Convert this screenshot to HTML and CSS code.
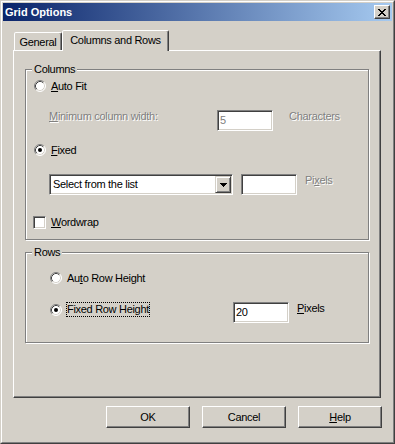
FILE: index.html
```html
<!DOCTYPE html>
<html>
<head>
<meta charset="utf-8">
<title>Grid Options</title>
<link rel="stylesheet" href="styles.css">
</head>
<body>
<div class="window">
  <div class="frame">
    <div class="titlebar">
      <span class="title">Grid Options</span>
      <div class="close">
        <svg width="8" height="7" viewBox="0 0 8 7" shape-rendering="crispEdges"><path fill="#000" d="M0 0h2v1H0zM6 0h2v1H6zM1 1h2v1H1zM5 1h2v1H5zM2 2h4v1H2zM3 3h2v1H3zM2 4h4v1H2zM1 5h2v1H1zM5 5h2v1H5zM0 6h2v1H0zM6 6h2v1H6z"/></svg>
      </div>
    </div>
    <div class="content">
      <div class="tabs">
        <div class="tab general">General</div>
        <div class="tab active">Columns and Rows</div>
      </div>
      <div class="panel">
        <div class="group cols">
          <span class="legend">Columns</span>
          <div class="row c1">
            <div class="opt">
              <svg class="radio" width="12" height="12" viewBox="0 0 12 12"><circle cx="6" cy="6" r="5" fill="#fff"/><path d="M2.82 9.18A4.5 4.5 0 0 1 9.18 2.82" stroke="#404040" fill="none"/><path d="M9.18 2.82A4.5 4.5 0 0 1 2.82 9.18" stroke="#D4D0C8" fill="none"/><path d="M2.11 9.89A5.5 5.5 0 0 1 9.89 2.11" stroke="#808080" fill="none"/><path d="M9.89 2.11A5.5 5.5 0 0 1 2.11 9.89" stroke="#fff" fill="none"/></svg>
              <span class="lbl"><u>A</u>uto Fit</span>
            </div>
          </div>
          <div class="row c2">
            <span class="dis mlabel"><u>M</u>inimum column width:</span>
            <div class="edit w56 grey">5</div>
            <span class="dis unit16">Characters</span>
          </div>
          <div class="row c3">
            <div class="opt">
              <svg class="radio" width="12" height="12" viewBox="0 0 12 12"><circle cx="6" cy="6" r="5" fill="#fff"/><path d="M2.82 9.18A4.5 4.5 0 0 1 9.18 2.82" stroke="#404040" fill="none"/><path d="M9.18 2.82A4.5 4.5 0 0 1 2.82 9.18" stroke="#D4D0C8" fill="none"/><path d="M2.11 9.89A5.5 5.5 0 0 1 9.89 2.11" stroke="#808080" fill="none"/><path d="M9.89 2.11A5.5 5.5 0 0 1 2.11 9.89" stroke="#fff" fill="none"/><circle cx="6" cy="6" r="2" fill="#000"/></svg>
              <span class="lbl"><u>F</u>ixed</span>
            </div>
          </div>
          <div class="row c4">
            <div class="select">
              <div class="select-text">Select from the list</div>
              <div class="dd-btn">
                <svg width="7" height="4" viewBox="0 0 7 4" shape-rendering="crispEdges"><path fill="#000" d="M0 0h7v1H0zM1 1h5v1H1zM2 2h3v1H2zM3 3h1v1H3z"/></svg>
              </div>
            </div>
            <div class="edit w56 gap8"></div>
            <span class="dis unit8">Pi<u>x</u>els</span>
          </div>
          <div class="row c5">
            <div class="opt">
              <div class="check"></div>
              <span class="lbl"><u>W</u>ordwrap</span>
            </div>
          </div>
        </div>

        <div class="group rows">
          <span class="legend">Rows</span>
          <div class="row rA">
            <div class="opt">
              <svg class="radio" width="12" height="12" viewBox="0 0 12 12"><circle cx="6" cy="6" r="5" fill="#fff"/><path d="M2.82 9.18A4.5 4.5 0 0 1 9.18 2.82" stroke="#404040" fill="none"/><path d="M9.18 2.82A4.5 4.5 0 0 1 2.82 9.18" stroke="#D4D0C8" fill="none"/><path d="M2.11 9.89A5.5 5.5 0 0 1 9.89 2.11" stroke="#808080" fill="none"/><path d="M9.89 2.11A5.5 5.5 0 0 1 2.11 9.89" stroke="#fff" fill="none"/></svg>
              <span class="lbl">Au<u>t</u>o Row Height</span>
            </div>
          </div>
          <div class="row rB">
            <div class="opt fixedw">
              <svg class="radio" width="12" height="12" viewBox="0 0 12 12"><circle cx="6" cy="6" r="5" fill="#fff"/><path d="M2.82 9.18A4.5 4.5 0 0 1 9.18 2.82" stroke="#404040" fill="none"/><path d="M9.18 2.82A4.5 4.5 0 0 1 2.82 9.18" stroke="#D4D0C8" fill="none"/><path d="M2.11 9.89A5.5 5.5 0 0 1 9.89 2.11" stroke="#808080" fill="none"/><path d="M9.89 2.11A5.5 5.5 0 0 1 2.11 9.89" stroke="#fff" fill="none"/><circle cx="6" cy="6" r="2" fill="#000"/></svg>
              <span class="lbl focus">Fixed Row Height</span>
            </div>
            <div class="edit w56">20</div>
            <span class="unit8"><u>P</u>ixels</span>
          </div>
        </div>
      </div>
      <div class="buttons">
        <button class="btn">OK</button>
        <button class="btn">Cancel</button>
        <button class="btn"><u>H</u>elp</button>
      </div>
    </div>
  </div>
</div>
</body>
</html>
```

FILE: styles.css
```css
html, body {
  margin: 0;
  padding: 0;
}
body {
  background: #D4D0C8;
  font-family: "Liberation Sans", Arial, sans-serif;
  font-size: 11px;
  line-height: 13px;
  letter-spacing: -0.3px;
  color: #000;
}
u {
  text-decoration: underline;
  text-underline-offset: 1px;
}
.window {
  width: 395px;
  height: 444px;
  box-sizing: border-box;
  border: 1px solid;
  border-color: #D4D0C8 #404040 #404040 #D4D0C8;
}
.frame {
  height: 100%;
  box-sizing: border-box;
  border: 1px solid;
  border-color: #fff #808080 #808080 #fff;
  padding: 1px;
  display: flex;
  flex-direction: column;
}
.titlebar {
  height: 18px;
  flex: none;
  background: linear-gradient(to right, #0A246A, #A6CAF0);
  display: flex;
  align-items: center;
  justify-content: space-between;
  padding: 0 2px 0 2px;
}
.title {
  color: #fff;
  font-weight: bold;
  letter-spacing: 0;
}
.close {
  width: 16px;
  height: 14px;
  box-sizing: border-box;
  background: #D4D0C8;
  border: 1px solid;
  border-color: #fff #404040 #404040 #fff;
  box-shadow: inset -1px -1px #808080;
  display: flex;
  align-items: center;
  justify-content: center;
}
.close svg { display: block; }
.content {
  flex: 1;
  padding: 9px 11px 0 10px;
}
.tabs {
  display: flex;
  align-items: flex-end;
  height: 20px;
  padding-left: 1px;
}
.tab {
  height: 18px;
  box-sizing: border-box;
  border: 1px solid;
  border-bottom: none;
  border-color: #fff #404040 transparent #fff;
  box-shadow: inset -1px 0 #808080;
  border-radius: 2px 2px 0 0;
  background: #D4D0C8;
  display: flex;
  align-items: center;
  justify-content: center;
  padding-bottom: 0;
}
.tab.general {
  width: 48px;
  padding-top: 1px;
}
.tab.active {
  width: 107px;
  height: 21px;
  margin-bottom: -1px;
  position: relative;
  z-index: 1;
  padding-bottom: 2px;
}
.panel {
  height: 348px;
  box-sizing: border-box;
  border: 1px solid;
  border-color: #fff #404040 #404040 #fff;
  box-shadow: inset -1px -1px #808080;
  padding: 18px 0 0 11px;
}
.group {
  position: relative;
  width: 344px;
  box-sizing: border-box;
  border: 1px solid #808080;
  box-shadow: inset 1px 1px #fff, 1px 1px #fff;
}
.group.cols {
  height: 171px;
  padding-top: 8px;
}
.group.rows {
  height: 91px;
  margin-top: 12px;
  padding-top: 17px;
}
.legend {
  position: absolute;
  top: -7px;
  left: 6px;
  padding: 0 2px;
  background: #D4D0C8;
}
.row {
  display: flex;
  align-items: center;
  height: 16px;
}
.opt {
  display: flex;
  align-items: center;
  gap: 4px;
}
.radio {
  display: block;
  flex: none;
}
.lbl {
  border: 1px dotted transparent;
}
.lbl.focus {
  border-color: #000;
}
.check {
  width: 13px;
  height: 13px;
  box-sizing: border-box;
  border: 1px solid;
  border-color: #808080 #fff #fff #808080;
  box-shadow: inset 1px 1px #404040, inset -1px -1px #D4D0C8;
  background: #fff;
}
.c1 { padding-left: 8px; }
.c2 {
  margin-top: 16px;
  height: 21px;
  align-items: flex-start;
  padding-left: 23px;
}
.c3 {
  margin-top: 11px;
  padding-left: 8px;
}
.c4 {
  margin-top: 16px;
  height: 21px;
  align-items: flex-start;
  padding-left: 23px;
}
.c5 {
  margin-top: 19px;
  padding-left: 7px;
}
.rA { padding-left: 24px; }
.rB {
  margin-top: 16px;
  height: 21px;
  align-items: flex-start;
  padding-left: 24px;
}
.fixedw {
  width: 183px;
  height: 15px;
}
.dis {
  color: #808080;
  text-shadow: 1px 1px 0 #fff;
}
.mlabel {
  width: 168px;
}
.unit16 { margin-left: 16px; }
.unit8 { margin-left: 8px; }
.gap8 { margin-left: 8px; }
.edit {
  height: 21px;
  box-sizing: border-box;
  border: 1px solid;
  border-color: #808080 #fff #fff #808080;
  box-shadow: inset 1px 1px #404040, inset -1px -1px #D4D0C8;
  background: #fff;
  padding-left: 2px;
  display: flex;
  align-items: center;
}
.w56 { width: 56px; }
.grey { color: #808080; }
.select {
  width: 184px;
  height: 21px;
  box-sizing: border-box;
  border: 1px solid;
  border-color: #808080 #fff #fff #808080;
  box-shadow: inset 1px 1px #404040, inset -1px -1px #D4D0C8;
  background: #fff;
  padding: 1px;
  display: flex;
}
.select-text {
  flex: 1;
  display: flex;
  align-items: center;
  padding-left: 2px;
}
.dd-btn {
  width: 16px;
  height: 17px;
  box-sizing: border-box;
  background: #D4D0C8;
  border: 1px solid;
  border-color: #D4D0C8 #404040 #404040 #D4D0C8;
  box-shadow: inset 1px 1px #fff, inset -1px -1px #808080;
  display: flex;
  align-items: center;
  justify-content: center;
}
.dd-btn svg { display: block; }
.buttons {
  display: flex;
  justify-content: flex-end;
  gap: 12px;
  margin-top: 8px;
  margin-right: -1px;
}
.btn {
  width: 84px;
  height: 22px;
  box-sizing: border-box;
  border: 1px solid;
  border-color: #fff #404040 #404040 #fff;
  box-shadow: inset -1px -1px #808080;
  background: #D4D0C8;
  font: inherit;
  letter-spacing: inherit;
  color: #000;
  padding: 0;
  margin: 0;
  display: flex;
  align-items: center;
  justify-content: center;
}
```
